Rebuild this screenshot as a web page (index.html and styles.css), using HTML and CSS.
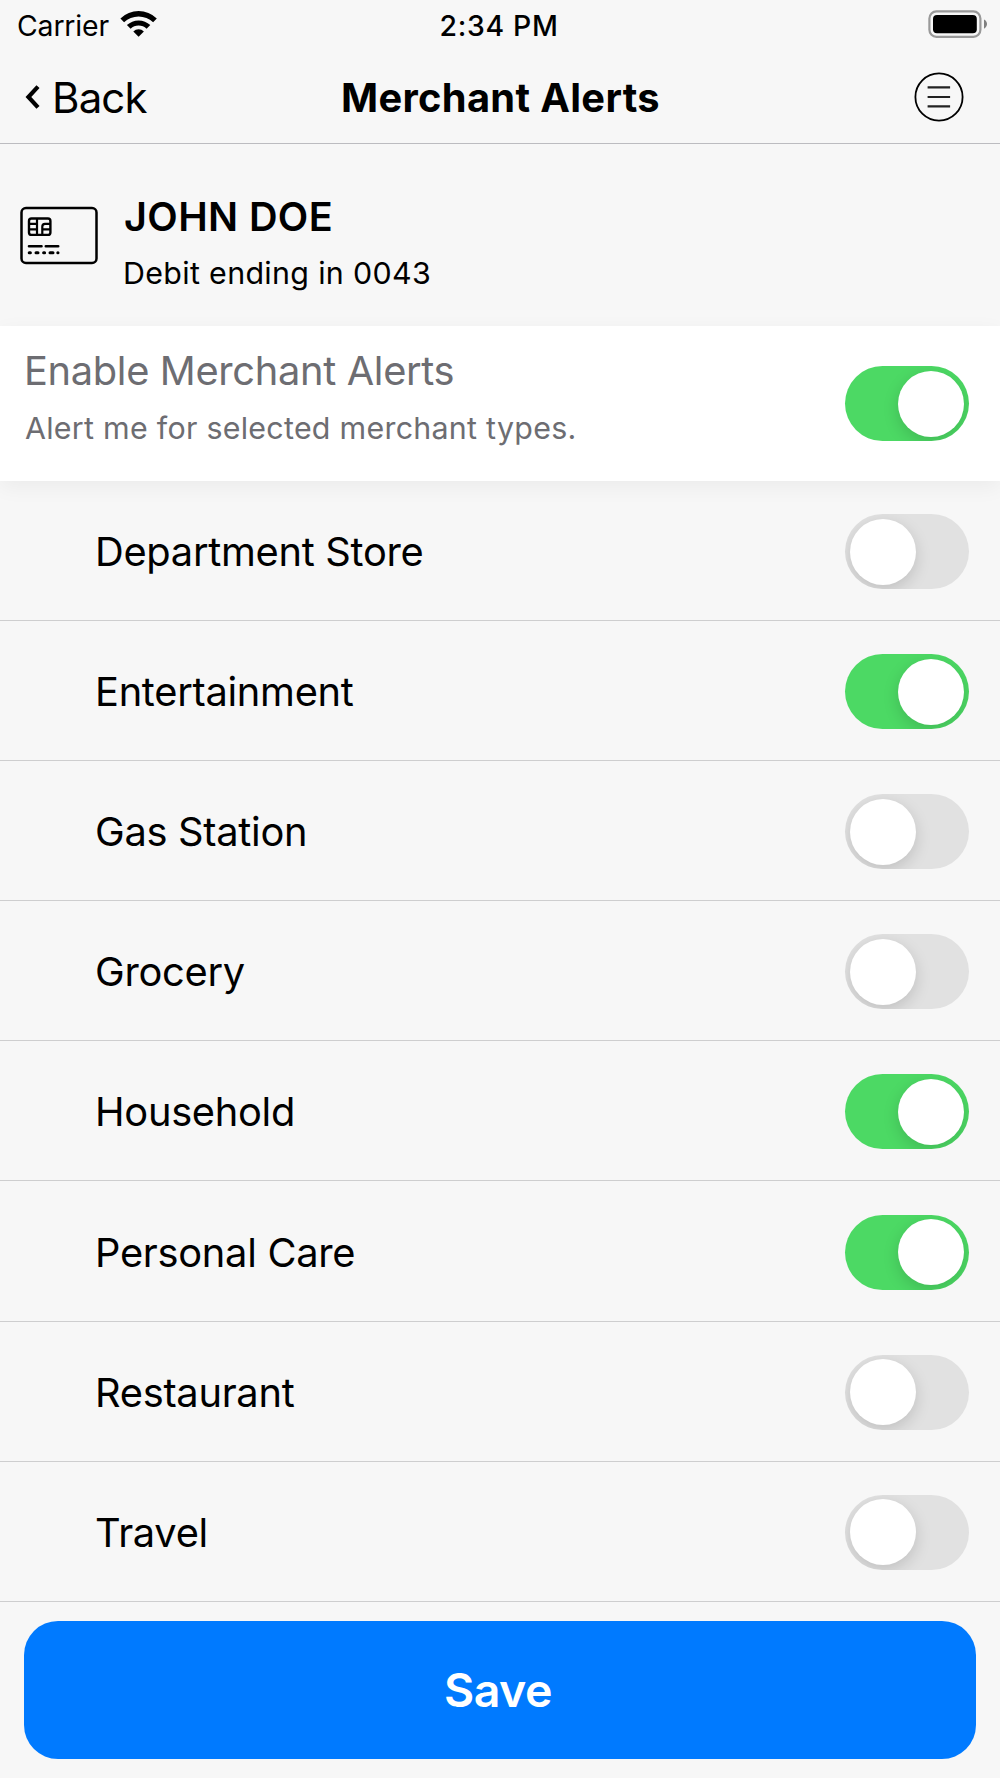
FILE: index.html
```
<!DOCTYPE html>
<html lang="en">
<head>
    <meta charset="UTF-8">
    <meta name="viewport" content="width=device-width, initial-scale=1.0">
    <title>Merchant Alerts</title>
    <link rel="stylesheet" href="styles.css">
</head>
<body>

    <div class="status-bar">
        <div class="carrier">
            <span>Carrier</span>
            <svg class="wifi" width="38" height="28" viewBox="0 0 38 28">
                <path d="M0.4 8.4 A26.3 26.3 0 0 1 36.8 8.4 L33.1 12.2 A21 21 0 0 0 4.1 12.2 Z"/>
                <path d="M6.9 15.1 A17 17 0 0 1 30.3 15.1 L26.6 18.8 A11.6 11.6 0 0 0 10.6 18.8 Z"/>
                <path d="M13.3 21.4 A7.8 7.8 0 0 1 23.9 21.4 L18.6 26.8 Z"/>
            </svg>
        </div>
        <span class="time">2:34 PM</span>
        <svg class="battery" width="60" height="28" viewBox="0 0 60 28">
            <rect x="1.4" y="1.4" width="51" height="25.4" rx="7" fill="none" stroke="#999" stroke-width="2.2"/>
            <rect x="5" y="5" width="43.8" height="18.2" rx="4"/>
            <path d="M56 9.6 C58 10.6 59 12.2 59 14.1 C59 16 58 17.6 56 18.8 Z" fill="#808080"/>
        </svg>
    </div>

    <header class="navbar">
        <a class="back" href="#">
            <svg width="15" height="24" viewBox="0 0 15 24">
                <path d="M13 1.6 L3.4 12 L13 22.4" fill="none" stroke="#000" stroke-width="4.2"/>
            </svg>
            <span>Back</span>
        </a>
        <h1>Merchant Alerts</h1>
        <svg class="menu" width="50" height="50" viewBox="0 0 50 50">
            <g fill="none" stroke="#000" stroke-width="1.8">
                <circle cx="25" cy="25" r="23.6"/>
                <path d="M13.6 15.3 H36.1 M13.6 25 H36.1 M13.6 34.4 H36.1" stroke="#222" stroke-width="2.2"/>
            </g>
        </svg>
    </header>

    <section class="account">
        <svg class="card-icon" width="80" height="60" viewBox="0 0 80 60">
            <g fill="none" stroke="#000">
                <rect x="2.5" y="2" width="75" height="55" rx="4.5" stroke-width="2.5"/>
                <!-- chip -->
                <rect x="10" y="12.5" width="21.4" height="16.4" rx="2.5" stroke-width="2.4"/>
                <path d="M10 17.9 H18 M10 23.4 H18 M18 12.5 V28.9 M31.4 17.9 H26 Q23.3 17.9 23.3 20.7 V28.9 M23.3 23.4 H31.4" stroke-width="2.2"/>
                <!-- number lines -->
                <path d="M10 40.3 H22.5 M26.8 40.3 H39.2" stroke-width="2.6" stroke-linecap="round"/>
                <path d="M10.2 46.8 H11.4 M17 46.8 H19 M24.6 46.8 H25.6 M31 46.8 H34 M38.8 46.8 H39" stroke-width="3" stroke-linecap="round"/>
            </g>
        </svg>
        <div>
            <h2>JOHN DOE</h2>
            <p>Debit ending in 0043</p>
        </div>
    </section>

    <section class="enable">
        <div>
            <h2>Enable Merchant Alerts</h2>
            <p>Alert me for selected merchant types.</p>
        </div>
        <span class="switch on"><i></i></span>
    </section>

    <ul class="merchants">
        <li>Department Store <span class="switch"><i></i></span></li>
        <li>Entertainment <span class="switch on"><i></i></span></li>
        <li>Gas Station <span class="switch"><i></i></span></li>
        <li>Grocery <span class="switch"><i></i></span></li>
        <li>Household <span class="switch on"><i></i></span></li>
        <li>Personal Care <span class="switch on"><i></i></span></li>
        <li>Restaurant <span class="switch"><i></i></span></li>
        <li>Travel <span class="switch"><i></i></span></li>
    </ul>

    <button class="save">Save</button>

</body>
</html>
```
FILE: styles.css
```
* {
    box-sizing: border-box;
    margin: 0;
    padding: 0;
}

body {
    background-color: #f7f7f7;
    color: #000;
    font-family: Inter, "Liberation Sans", sans-serif;
    height: 1778px;
    overflow: hidden;
}

/* Status bar */
.status-bar {
    display: grid;
    grid-template-columns: 1fr auto 1fr;
    height: 51px;
    padding: 0 12px 0 17px;
    font-size: 28.4px;
    line-height: 51px;
}

.carrier {
    display: flex;
    letter-spacing: -0.15px;
}

.wifi {
    margin: 10px 0 0 11px;
}

.time {
    padding-right: 7px;
    font-weight: 500;
    letter-spacing: 0.68px;
}

.battery {
    justify-self: end;
    margin-top: 10px;
}

/* Navigation bar */
.navbar {
    display: grid;
    grid-template-columns: 1fr auto 1fr;
    align-items: center;
    height: 93px;
    padding: 0 36px 0 25px;
    border-bottom: 1px solid #bcbcc0;
}

.back {
    display: flex;
    align-items: center;
    gap: 12px;
    color: #000;
    font-size: 42px;
    letter-spacing: -0.85px;
    text-decoration: none;
}

.navbar h1 {
    padding: 1px 0 0 12px;
    font-size: 39.8px;
    font-weight: 700;
    letter-spacing: 0.34px;
}

.menu {
    justify-self: end;
    margin-bottom: 1px;
}

/* Card holder */
.account {
    display: flex;
    height: 182px;
    padding: 49px 0 0 19px;
}

.card-icon {
    margin: 13px 24px 0 0;
}

.account h2 {
    margin-left: 1px;
    font-size: 39.6px;
    font-weight: 600;
    letter-spacing: 0.4px;
    line-height: 48px;
}

.account p {
    margin-top: 13px;
    font-size: 30.4px;
    letter-spacing: 0.33px;
    line-height: 38px;
}

/* Main switch */
.enable {
    position: relative;
    display: flex;
    align-items: center;
    justify-content: space-between;
    height: 155px;
    padding: 0 31.5px 0 24px;
    background-color: #fff;
    box-shadow: 0 6px 20px rgba(0, 0, 0, 0.05);
    color: #6d6d72;
}

.enable div {
    align-self: flex-start;
    padding-top: 21px;
}

.enable h2 {
    font-size: 39.8px;
    font-weight: 400;
    letter-spacing: -0.33px;
    line-height: 48px;
}

.enable p {
    margin: 14px 0 0 1px;
    font-size: 30.4px;
    letter-spacing: 0.27px;
    line-height: 38px;
}

/* Merchant list */
.merchants {
    list-style: none;
}

.merchants li {
    display: flex;
    align-items: center;
    justify-content: space-between;
    height: 140.1px;
    padding: 2px 31.5px 0 95px;
    border-bottom: 1px solid #cececf;
    font-size: 39.8px;
    letter-spacing: -0.28px;
}

.switch {
    display: flex;
    flex-shrink: 0;
    width: 123.5px;
    height: 75px;
    padding: 4.5px 5px;
    border-radius: 38px;
    background-color: #e1e1e1;
    overflow: hidden;
}

.switch i {
    width: 66px;
    height: 66px;
    border-radius: 50%;
    background-color: #fff;
    box-shadow: 0 5px 16px rgba(0, 0, 0, 0.15);
}

.switch.on {
    justify-content: flex-end;
    background-color: #4cd964;
}

.save {
    display: block;
    width: 952px;
    height: 138px;
    margin: 19px auto 0;
    padding-right: 4px;
    border: none;
    border-radius: 34px;
    background-color: #007aff;
    color: #fff;
    font-family: inherit;
    font-size: 46.5px;
    font-weight: 600;
    letter-spacing: -0.5px;
}
```
